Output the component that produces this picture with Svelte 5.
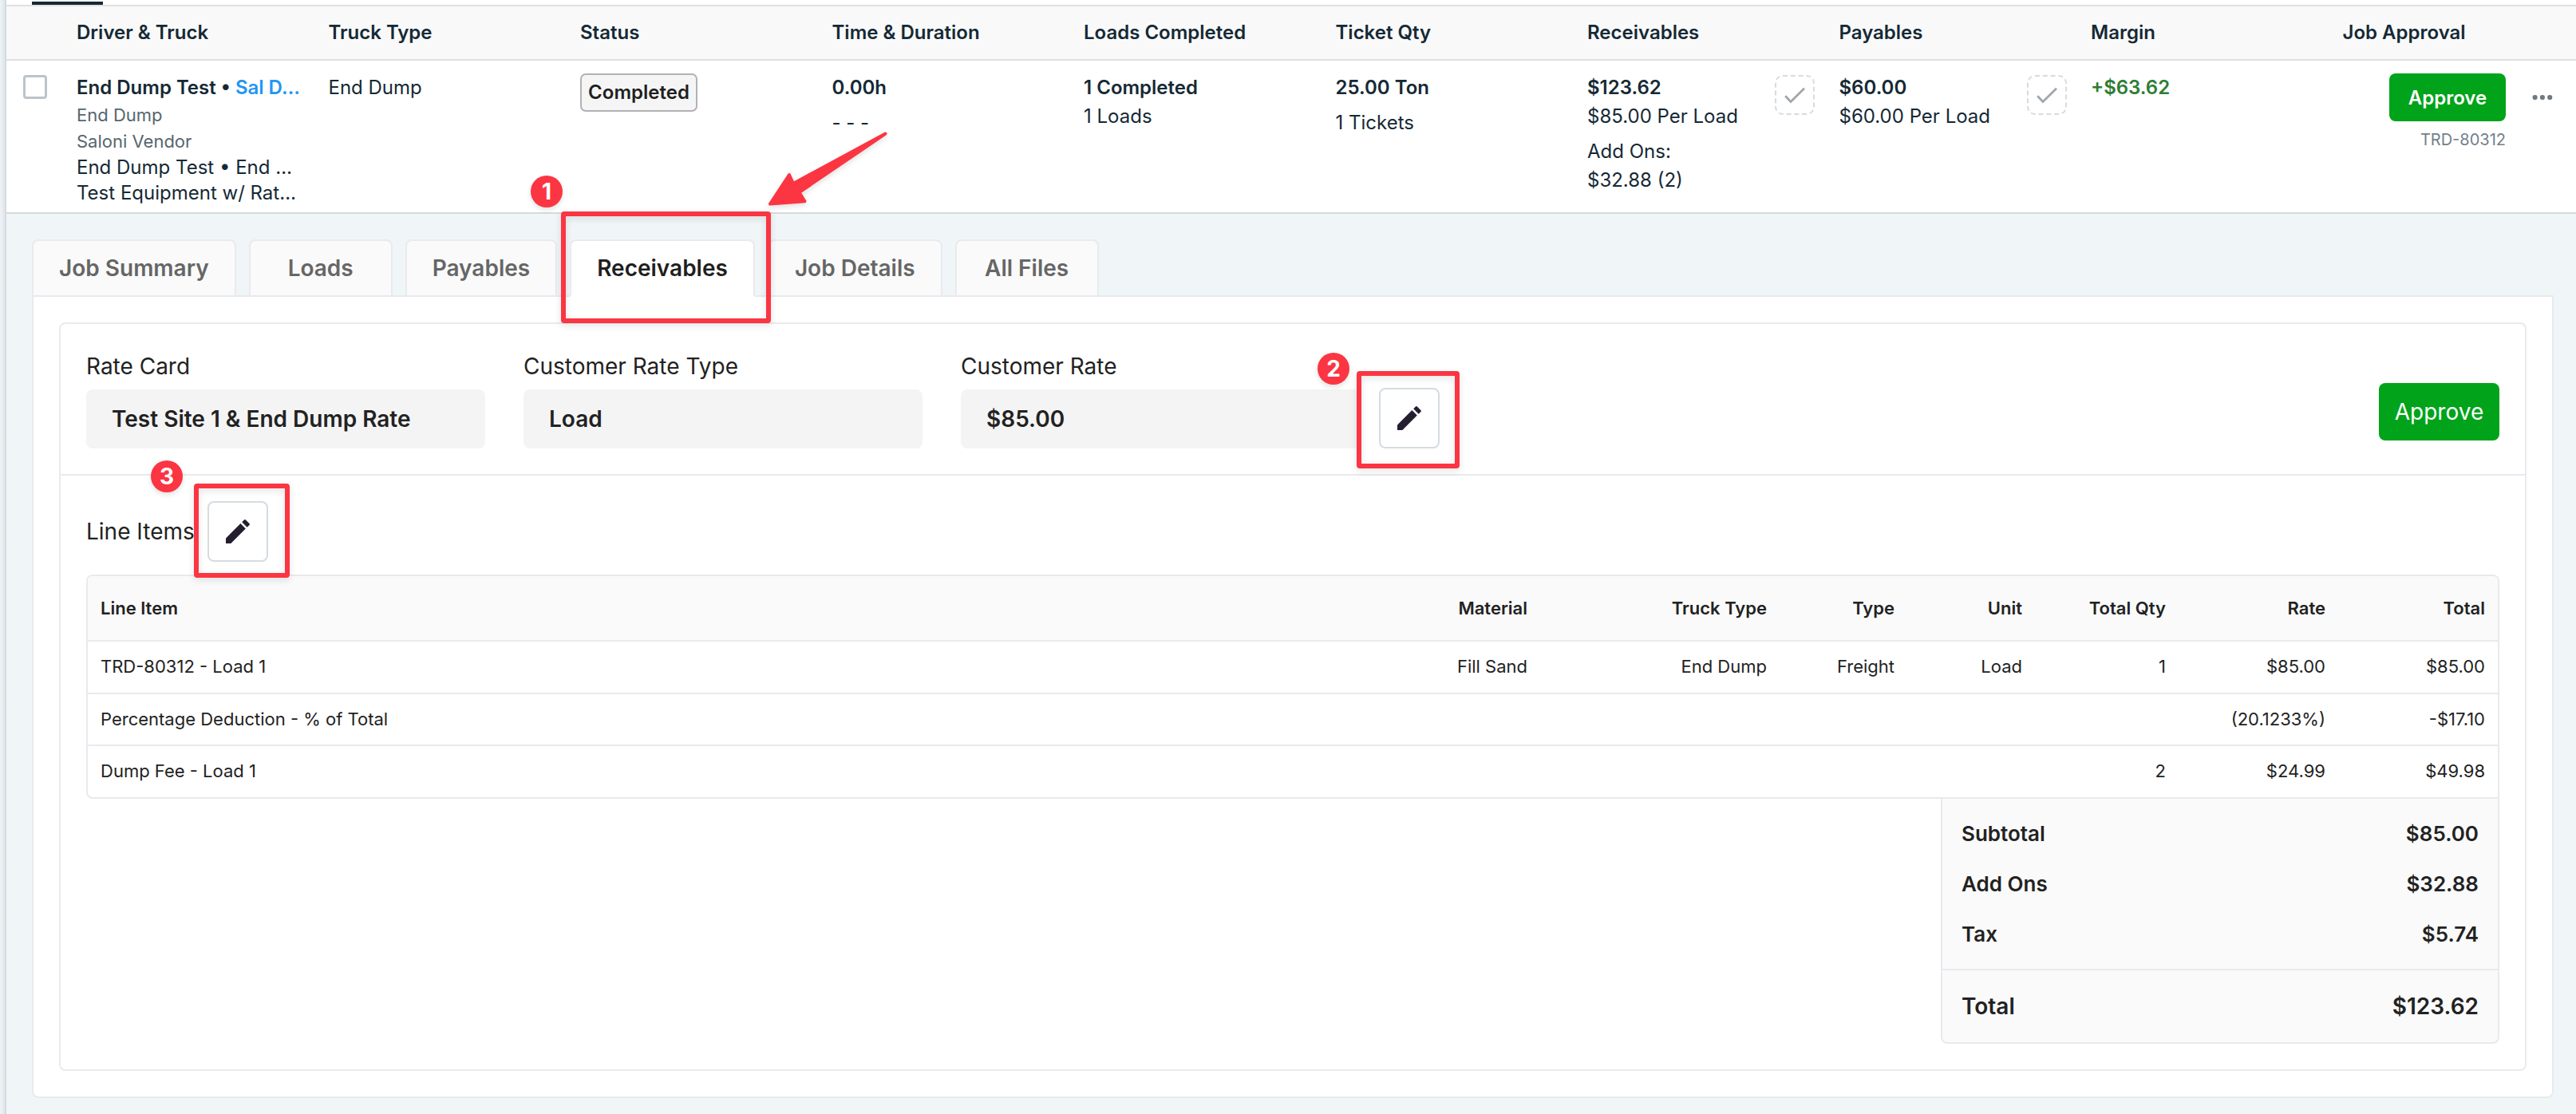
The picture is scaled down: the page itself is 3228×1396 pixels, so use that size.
<script lang="ts">
type Cell = { text: string; kind?: string };

const columns = [
	'Driver & Truck',
	'Truck Type',
	'Status',
	'Time & Duration',
	'Loads Completed',
	'Ticket Qty',
	'Receivables',
	'Payables',
	'Margin',
	'Job Approval',
];

const tabs = ['Job Summary', 'Loads', 'Payables', 'Receivables', 'Job Details', 'All Files'];
let activeTab = $state('Receivables');

const receivables: Cell[] = [
	{ text: '$123.62', kind: 'strong' },
	{ text: '$85.00 Per Load' },
	{ text: 'Add Ons:', kind: 'spaced' },
	{ text: '$32.88 (2)' },
];
const payables: Cell[] = [
	{ text: '$60.00', kind: 'strong' },
	{ text: '$60.00 Per Load' },
];

const fields = [
	{ label: 'Rate Card', value: 'Test Site 1 & End Dump Rate' },
	{ label: 'Customer Rate Type', value: 'Load' },
	{ label: 'Customer Rate', value: '$85.00' },
];

const itemColumns = ['Line Item', 'Material', 'Truck Type', 'Type', 'Unit', 'Total Qty', 'Rate', 'Total'];
const items = [
	['TRD-80312 - Load 1', 'Fill Sand', 'End Dump', 'Freight', 'Load', '1', '$85.00', '$85.00'],
	['Percentage Deduction - % of Total', '', '', '', '', '', '(20.1233%)', '-$17.10'],
	['Dump Fee - Load 1', '', '', '', '', '2', '$24.99', '$49.98'],
];

const summary = [
	{ label: 'Subtotal', value: '$85.00' },
	{ label: 'Add Ons', value: '$32.88' },
	{ label: 'Tax', value: '$5.74' },
];
</script>

{#snippet amounts(lines: Cell[])}
	<div class="cell amounts">
		<div>
			{#each lines as line}
				<div class="line {line.kind ?? ''}">{line.text}</div>
			{/each}
		</div>
		<button class="check" aria-label="Approve amount">
			<svg viewBox="0 0 50 50">
				<path d="M13.2 26.2l6.8 7.2L37 16.8" />
			</svg>
		</button>
	</div>
{/snippet}

{#snippet pencil()}
	<button class="edit" aria-label="Edit">
		<svg viewBox="0 0 30 30">
			<path d="M0 23.4L18.4 5l6.4 6.4L6.3 29.9H0z" />
			<path d="M20.2 3.3L22.9.6q1-1 2 0l4.5 4.5q1 1 0 2l-2.8 2.7z" />
		</svg>
	</button>
{/snippet}

<div class="page">
	<div class="rail"></div>
	<main>
		<div class="top-strip"><span></span></div>

		<div class="job-grid job-head">
			<span></span>
			{#each columns as column}
				<span>{column}</span>
			{/each}
		</div>

		<div class="job-grid job-row">
			<div><span class="checkbox"></span></div>
			<div class="cell">
				<div class="line strong">End Dump Test • <a href="#driver">Sal D…</a></div>
				<div class="muted">End Dump</div>
				<div class="muted">Saloni Vendor</div>
				<div class="tight">End Dump Test • End …</div>
				<div class="tight">Test Equipment w/ Rat…</div>
			</div>
			<div class="cell"><div class="line">End Dump</div></div>
			<div class="cell"><span class="status">Completed</span></div>
			<div class="cell">
				<div class="line strong">0.00h</div>
				<div class="line spaced">- - -</div>
			</div>
			<div class="cell">
				<div class="line strong">1 Completed</div>
				<div class="line">1 Loads</div>
			</div>
			<div class="cell">
				<div class="line strong">25.00 Ton</div>
				<div class="line spaced">1 Tickets</div>
			</div>
			{@render amounts(receivables)}
			{@render amounts(payables)}
			<div class="cell"><div class="line margin">+$63.62</div></div>
			<div class="approval">
				<button class="approve small">Approve</button>
				<span>TRD-80312</span>
			</div>
			<div class="more">
				<svg viewBox="0 0 26 8">
					<circle cx="3.6" cy="4" r="3.1" />
					<circle cx="12.9" cy="4" r="3.1" />
					<circle cx="22.2" cy="4" r="3.1" />
				</svg>
			</div>
		</div>

		<section class="details">
			<nav class="tabs">
				{#each tabs as tab}
					<button class:active={tab === activeTab} onclick={() => (activeTab = tab)}>{tab}</button>
				{/each}
			</nav>

			<div class="panel">
				<div class="card">
					<div class="rates">
						{#each fields as field}
							<div class="field">
								<div class="label">{field.label}</div>
								<div class="value">{field.value}</div>
							</div>
						{/each}
						{@render pencil()}
						<button class="approve large">Approve</button>
					</div>

					<div class="line-items">
						<div class="title">
							<span>Line Items</span>
							{@render pencil()}
						</div>

						<div class="table">
							<div class="row head">
								{#each itemColumns as column}
									<span>{column}</span>
								{/each}
							</div>
							{#each items as item}
								<div class="row">
									{#each item as value}
										<span>{value}</span>
									{/each}
								</div>
							{/each}
						</div>

						<div class="summary">
							<div class="sums">
								{#each summary as line}
									<div class="sum"><span>{line.label}</span><span>{line.value}</span></div>
								{/each}
							</div>
							<div class="sum total"><span>Total</span><span>$123.62</span></div>
						</div>
					</div>
				</div>
			</div>
		</section>
	</main>

	<!-- walkthrough callouts, drawn over the page -->
	<div class="frame frame-tab"></div>
	<div class="frame frame-rate"></div>
	<div class="frame frame-items"></div>
	<span class="step step-tab">1</span>
	<span class="step step-rate">2</span>
	<span class="step step-items">3</span>
	<svg class="arrow" viewBox="955 155 170 115">
		<path d="M965 255.5L989 219l5 11L1109.5 167.5 1001.5 241l7 11.2z" />
	</svg>
</div>

<style>
	:global(body) {
		background: #f0f5f8;
	}

	.page {
		position: relative;
		display: flex;
		width: 3228px;
		height: 1396px;
		overflow: hidden;
		background: #f0f5f8;
		font-family: Inter, sans-serif;
		font-size: 24px;
		color: #152935;
	}

	button {
		font-family: inherit;
		margin: 0;
		padding: 0;
		cursor: pointer;
	}

	.rail {
		flex: none;
		box-sizing: border-box;
		width: 8px;
		background: linear-gradient(90deg, #eef3f6, #dfe6ea);
		border-right: 2px solid #d5dbdf;
	}

	main {
		flex: 1;
		display: flex;
		flex-direction: column;
	}

	.top-strip {
		height: 6px;
		box-sizing: border-box;
		padding: 2px 0 0 32px;
		background: #fff;

		span {
			display: block;
			width: 89px;
			height: 4px;
			background: #152935;
		}
	}

	.job-grid {
		display: grid;
		grid-template-columns: 88px repeat(9, 315.5px) 204.5px 1fr;
	}

	.job-head {
		height: 66px;
		align-items: center;
		background: #f9f9f9;
		border-top: 2px solid #e0e0e0;
		border-bottom: 2px solid #e0e0e0;
		font-weight: 600;
		line-height: 29px;

		span {
			padding-bottom: 1px;
		}
	}

	.job-row {
		box-sizing: border-box;
		height: 192px;
		padding-top: 16px;
		background: #fff;
		border-bottom: 2px solid #d5dadd;
	}

	.cell {
		padding-right: 30.5px;
		white-space: nowrap;
	}

	.line {
		line-height: 36px;
	}

	.strong {
		font-weight: 600;
	}

	.spaced {
		margin-top: 8px;
	}

	.muted {
		font-size: 22px;
		line-height: 33px;
		color: #56666f;
	}

	.tight {
		line-height: 32px;
	}

	.margin {
		font-weight: 600;
		color: #2e7d32;
	}

	a {
		color: #2196f3;
		text-decoration: none;
	}

	.checkbox {
		display: block;
		box-sizing: border-box;
		width: 30px;
		height: 30px;
		margin: 2px 0 0 21px;
		border: 3px solid #bcc4ca;
		border-radius: 4px;
	}

	.status {
		display: inline-block;
		box-sizing: border-box;
		width: 147px;
		height: 48px;
		border: 2px solid #b1b1b6;
		border-radius: 7px;
		background: #f5f5f5;
		color: #1f1f1f;
		font-weight: 600;
		line-height: 44px;
		text-align: center;
	}

	.amounts {
		display: flex;
		justify-content: space-between;
		align-items: flex-start;
	}

	.check {
		flex: none;
		width: 50px;
		height: 50px;
		margin-top: 2px;
		box-sizing: border-box;
		border: 2px dashed #d5dce0;
		border-radius: 10px;
		background: #fff;

		svg {
			display: block;
			width: 50px;
			height: 50px;
			margin: -2px;
			fill: none;
			stroke: #a0a7ac;
			stroke-width: 2.8;
		}
	}

	.approval {
		display: flex;
		flex-direction: column;
		align-items: flex-end;
		gap: 8px;
		font-size: 20px;
		line-height: 30px;
		color: #73808a;
	}

	.approve {
		border: 0;
		border-radius: 8px;
		background: #00a31a;
		color: #fff;

		&.small {
			width: 146px;
			height: 60px;
			font-size: 24px;
			font-weight: 600;
		}

		&.large {
			width: 151px;
			height: 72px;
			margin: 0 0 10px auto;
			font-size: 28px;
		}
	}

	.more svg {
		display: block;
		width: 26px;
		height: 8px;
		margin: 26px 0 0 33px;
		fill: #6d7a83;
	}

	.details {
		padding: 32px 28px 20px 32px;
	}

	.tabs {
		display: flex;
		gap: 16px;
		height: 72px;
		margin-bottom: -2px;

		button {
			box-sizing: border-box;
			min-width: 180px;
			padding: 0 32px;
			border: 2px solid #e9eaee;
			border-radius: 8px 8px 0 0;
			background: #fafafa;
			font-size: 28px;
			font-weight: 600;
			color: #666;
		}

		.active {
			background: #fff;
			border-bottom-color: #fff;
			color: #1f1f1f;
			z-index: 1;
		}
	}

	.panel {
		padding: 32px;
		border: 2px solid #e9eaee;
		border-radius: 0 0 8px 8px;
		background: #fff;
		color: #222;
	}

	.card {
		box-sizing: border-box;
		height: 938px;
		border: 2px solid #e9eaee;
		border-radius: 8px;
	}

	.rates {
		display: flex;
		align-items: flex-end;
		box-sizing: border-box;
		height: 190px;
		padding: 32px;
		border-bottom: 2px solid #e9eaee;

		.edit {
			margin-left: -24px;
		}
	}

	.field {
		width: 500px;
		margin-right: 48px;
		font-size: 28px;
	}

	.label {
		line-height: 40px;
		margin-bottom: 9px;
	}

	.value {
		height: 74px;
		padding-left: 32px;
		border-radius: 8px;
		background: #f4f4f4;
		font-weight: 600;
		line-height: 75px;
	}

	.edit {
		display: grid;
		place-items: center;
		box-sizing: border-box;
		width: 76px;
		height: 76px;
		border: 2px solid #d5dce0;
		border-radius: 8px;
		background: #fff;

		svg {
			width: 30px;
			height: 30px;
			fill: #241e30;
		}
	}

	.line-items {
		padding: 32px;
	}

	.title {
		display: flex;
		align-items: center;
		gap: 16px;
		margin-bottom: 16px;
		font-size: 28px;
	}

	.table {
		border: 2px solid #e9eaee;
		border-radius: 8px 8px 0 8px;
		font-size: 22px;
	}

	.row {
		display: grid;
		grid-template-columns: 1fr 300px 300px 160px 160px 180px 200px 200px;
		height: 63.6px;
		align-items: center;
		border-top: 2px solid #e9eaee;

		span {
			padding: 0 16px 1px;
			text-align: right;
		}

		span:first-child {
			text-align: left;
		}

		&.head {
			height: 80px;
			border-top: 0;
			border-radius: 6px 6px 0 0;
			background: #fafafa;
			font-weight: 600;
		}
	}

	.summary {
		box-sizing: border-box;
		width: 700px;
		height: 307px;
		margin-left: auto;
		border: 2px solid #e9eaee;
		border-top: 0;
		border-radius: 0 0 8px 8px;
		background: #fafafa;
		font-size: 26px;
		font-weight: 600;
	}

	.sums {
		box-sizing: border-box;
		height: 215px;
		padding-top: 12px;
		border-bottom: 2px solid #e9eaee;
	}

	.sum {
		display: flex;
		justify-content: space-between;
		padding: 0 24px;
		line-height: 63px;
	}

	.total {
		font-size: 28px;
		line-height: 91px;
	}

	.frame {
		position: absolute;
		box-sizing: border-box;
		border: 6px solid #fb3542;
		border-radius: 4px;
		filter: drop-shadow(0 3px 4px rgba(0, 0, 0, 0.12));
	}

	.frame-tab {
		left: 703px;
		top: 265px;
		width: 263px;
		height: 140px;
	}

	.frame-rate {
		left: 1700px;
		top: 465px;
		width: 129px;
		height: 122px;
	}

	.frame-items {
		left: 243px;
		top: 606px;
		width: 120px;
		height: 118px;
	}

	.step {
		position: absolute;
		width: 40px;
		height: 40px;
		border-radius: 50%;
		background: #fb3542;
		color: #fff;
		font-size: 28px;
		font-weight: 700;
		line-height: 40px;
		text-align: center;
		box-shadow: 0 3px 6px rgba(0, 0, 0, 0.12);
	}

	.step-tab {
		left: 665px;
		top: 220px;
	}

	.step-rate {
		left: 1651px;
		top: 442px;
	}

	.step-items {
		left: 189px;
		top: 577px;
	}

	.arrow {
		position: absolute;
		left: 955px;
		top: 155px;
		width: 170px;
		height: 115px;
		fill: #fb3542;
		stroke: #fb3542;
		stroke-width: 4;
		stroke-linejoin: round;
		filter: drop-shadow(0 3px 3px rgba(0, 0, 0, 0.12));
	}
</style>
